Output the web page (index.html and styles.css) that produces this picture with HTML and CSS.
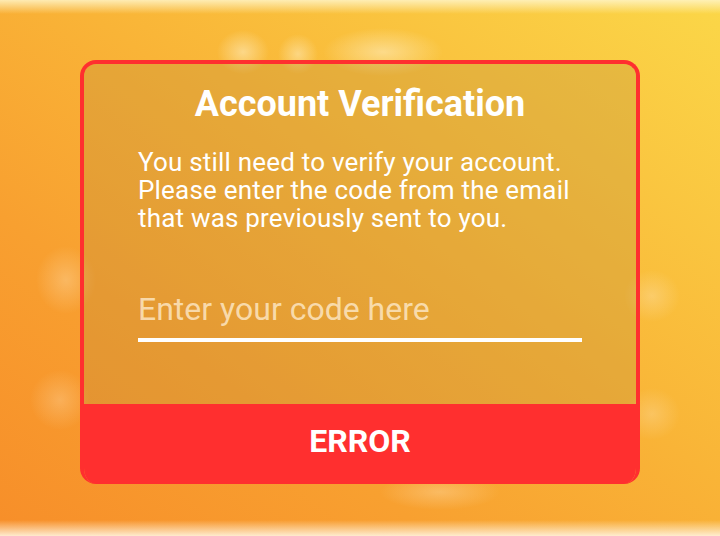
FILE: index.html
```html
<!DOCTYPE html>
<html lang="en">
<head>
<meta charset="utf-8">
<title>Account Verification</title>
<link rel="stylesheet" href="styles.css">
</head>
<body>
  <div class="card">
    <div class="card-body">
      <h1 class="title">Account Verification</h1>
      <p class="message">You still need to verify your account. Please enter the code from the email that was previously sent to you.</p>
      <input class="code-input" type="text" placeholder="Enter your code here">
    </div>
    <button class="error-btn" type="button">ERROR</button>
  </div>
</body>
</html>
```

FILE: styles.css
```css
html, body {
  margin: 0;
  padding: 0;
  width: 720px;
  height: 536px;
  overflow: hidden;
}

body {
  font-family: Roboto, "Liberation Sans", sans-serif;
  background:
    linear-gradient(to bottom, rgba(255,245,200,0.85) 0px, rgba(255,240,190,0) 14px),
    linear-gradient(to top, rgba(255,240,215,0.95) 0px, rgba(255,235,210,0) 16px),
    radial-gradient(ellipse 26px 22px at 243px 52px, rgba(255,240,200,0.55), rgba(255,240,200,0) 100%),
    radial-gradient(ellipse 20px 20px at 298px 54px, rgba(255,240,200,0.5), rgba(255,240,200,0) 100%),
    radial-gradient(ellipse 60px 24px at 383px 52px, rgba(255,240,200,0.55), rgba(255,240,200,0) 100%),
    radial-gradient(ellipse 30px 34px at 66px 280px, rgba(255,230,190,0.35), rgba(255,230,190,0) 100%),
    radial-gradient(ellipse 30px 30px at 60px 400px, rgba(255,230,190,0.3), rgba(255,230,190,0) 100%),
    radial-gradient(ellipse 28px 26px at 652px 296px, rgba(255,230,190,0.35), rgba(255,230,190,0) 100%),
    radial-gradient(ellipse 28px 26px at 652px 414px, rgba(255,230,190,0.3), rgba(255,230,190,0) 100%),
    radial-gradient(ellipse 60px 18px at 440px 492px, rgba(255,230,190,0.35), rgba(255,230,190,0) 100%),
    linear-gradient(to bottom left, #fbd748 0%, #f9b437 45%, #f8a030 70%, #f78e29 100%);
}

.card {
  width: 560px;
  height: 424px;
  margin: 60px auto 0;
  box-sizing: border-box;
  border: 4px solid #ff2f2f;
  border-bottom: 0;
  border-radius: 16px;
  overflow: hidden;
  display: flex;
  flex-direction: column;
}

.card-body {
  flex: 1;
  background: rgba(185, 140, 60, 0.3);
  padding: 19px 54px 0;
  display: flex;
  flex-direction: column;
  color: #fff;
}

.title {
  margin: 0;
  font-size: 36px;
  line-height: 42px;
  font-weight: 700;
  text-align: center;
}

.message {
  margin: 23px 0 0;
  font-size: 26px;
  line-height: 28px;
  font-weight: 400;
  letter-spacing: 0.2px;
}

.code-input {
  margin: 48px 0 0;
  padding: 0;
  height: 62px;
  box-sizing: border-box;
  border: 0;
  border-bottom: 4px solid #fff;
  background: transparent;
  font-family: Roboto, "Liberation Sans", sans-serif;
  font-size: 32px;
  color: #fff;
  outline: none;
}

.code-input::placeholder {
  color: rgba(255, 238, 210, 0.75);
}

.error-btn {
  height: 80px;
  margin: 0 -4px;
  border: 0;
  background: #ff2f2f;
  color: #fff;
  font-family: Roboto, "Liberation Sans", sans-serif;
  font-size: 32px;
  font-weight: 700;
  padding: 0 0 6px;
  cursor: pointer;
}
```
